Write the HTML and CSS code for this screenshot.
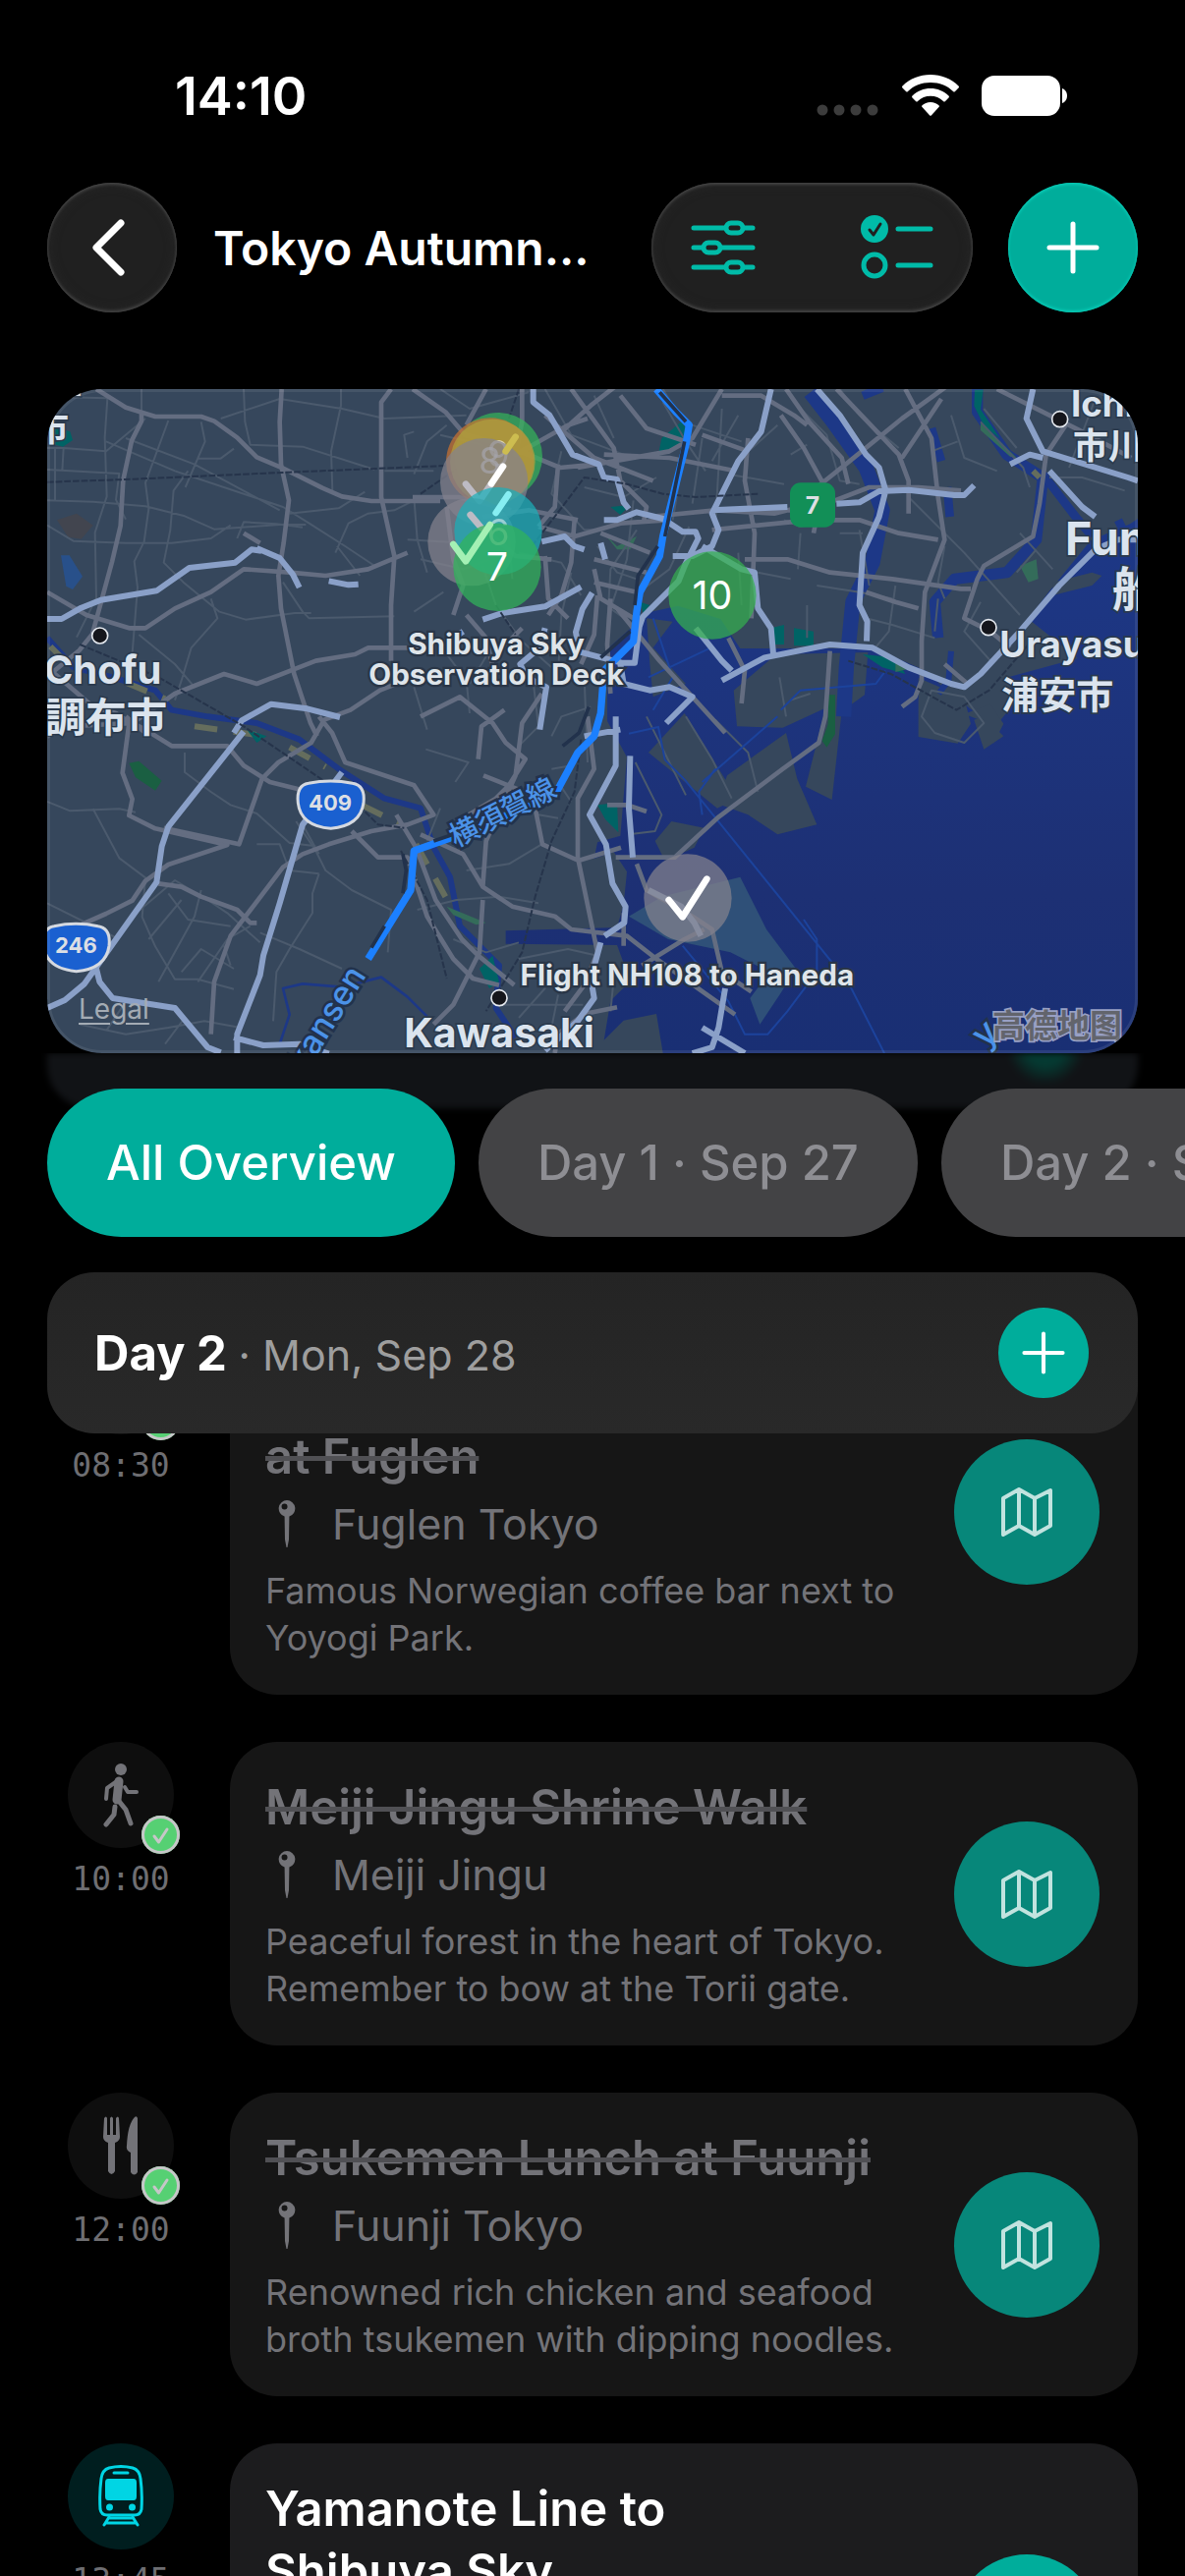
FILE: index.html
```
<!DOCTYPE html>
<html lang="en">
<head>
  <meta charset="UTF-8">
  <meta name="viewport" content="width=device-width, initial-scale=1.0">
  <title>Tokyo Autumn</title>
  <link rel="stylesheet" href="styles.css">
</head>
<body>
  <!-- shared icons -->
  <svg class="sprite" aria-hidden="true">
    <symbol id="i-plus" viewBox="0 0 54 54">
      <path d="M27 3v48M3 27h48" fill="none" stroke="currentColor" stroke-width="5" stroke-linecap="round"/>
    </symbol>
    <symbol id="i-map" viewBox="0 0 52 50">
      <path d="M2 11 18 2l16 9 16-8v36l-16 9-16-9-16 9zM18 2v37M34 11v37" fill="none" stroke="currentColor" stroke-width="4" stroke-linejoin="round"/>
    </symbol>
    <symbol id="i-pin" viewBox="0 0 18 48">
      <path fill-rule="evenodd" fill="currentColor" d="M9 0a8.500 8.500 0 0 1 2.400 16.600L11 40 9.500 48h-1L7 40 6.600 16.600A8.500 8.500 0 0 1 9 0zM6.500 3.500a3 3 0 1 0 .1 6 3 3 0 0 0-.1-6z"/>
    </symbol>
    <symbol id="i-check" viewBox="0 0 39 39">
      <path d="M13 21l4.500 6L26 14" fill="none" stroke="currentColor" stroke-width="3" stroke-linecap="round" stroke-linejoin="round"/>
    </symbol>
  </svg>

  <div class="app">
    <div class="status-bar">
      <span class="clock">14:10</span>
      <div class="status-icons">
        <svg width="64" height="12" viewBox="0 0 64 12" class="signal"><circle cx="6" cy="6" r="5.500"/><circle cx="23" cy="6" r="5.500"/><circle cx="40" cy="6" r="5.500"/><circle cx="57" cy="6" r="5.500"/></svg>
        <svg width="58" height="42" viewBox="0 0 58 42" fill="#fff">
          <path d="M29 0C40 0 50 4 57.500 11.500q1 1 0 2L54 17q-1 1-2 0C46 11 38 8 29 8S12 11 6 17q-1 1-2 0L.5 13.500q-1-1 0-2C8 4 18 0 29 0z"/>
          <path d="M29 14c7 0 13.500 2.500 18.500 7.500q1 1 0 2L44 27q-1 1-2 0c-3.500-3.500-8-5.200-13-5.200S19.500 23.500 16 27q-1 1-2 0l-3.500-3.500q-1-1 0-2C15.500 16.500 22 14 29 14z"/>
          <path d="M29 28c3.500 0 6.500 1.300 8.500 3.300q.8.900 0 1.800l-7.500 8.200q-1 1-2 0l-7.500-8.200q-.8-.9 0-1.800C22.500 29.300 25.500 28 29 28z"/>
        </svg>
        <svg width="88" height="41" viewBox="0 0 88 41" fill="#fff"><rect width="80" height="41" rx="13"/><path d="M82 13c3 1 5 4 5 7.500s-2 6.500-5 7.500z"/></svg>
      </div>
    </div>

    <header class="nav">
      <button class="round-btn glass" aria-label="Back">
        <svg width="42" height="58" viewBox="0 0 42 58"><path d="M30 4 5 29l25 25" fill="none" stroke="#fff" stroke-width="7" stroke-linecap="round" stroke-linejoin="round"/></svg>
      </button>
      <h1 class="nav-title">Tokyo Autumn...</h1>
      <div class="nav-group glass">
        <button class="plain-btn" aria-label="Filters">
          <svg width="66" height="56" viewBox="0 0 66 56" fill="none" stroke="currentColor" stroke-width="5" stroke-linecap="round">
            <path d="M3 8h32M54 8h9M3 28h8M32 28h31M3 48h32M54 48h9"/>
            <rect x="36" y="3" width="17" height="10" rx="5"/><rect x="13" y="23" width="17" height="10" rx="5"/><rect x="36" y="43" width="17" height="10" rx="5"/>
          </svg>
        </button>
        <button class="plain-btn" aria-label="Checklist">
          <svg width="74" height="66" viewBox="0 0 74 66" fill="none" stroke="currentColor" stroke-width="5" stroke-linecap="round">
            <circle cx="14" cy="14" r="14" fill="currentColor" stroke="none"/>
            <path d="M9 15l4 5 7-11" stroke="#202020" stroke-width="3" stroke-linejoin="round"/>
            <circle cx="14" cy="51" r="11"/><path d="M38 14h33M38 51h33"/>
          </svg>
        </button>
      </div>
      <button class="round-btn accent" aria-label="Add"><svg width="54" height="54"><use href="#i-plus"/></svg></button>
    </header>

    <main>
      <section class="map" aria-label="Trip map">
        <svg viewBox="0 0 3330 2028">
          <rect width="3330" height="2028" fill="#36475c"/>

          <!-- Tokyo bay -->
          <linearGradient id="sea" x1="0" y1="0" x2="0" y2="1"><stop offset="0" stop-color="#1d3887"/><stop offset=".7" stop-color="#1d3074"/><stop offset="1" stop-color="#192f74"/></linearGradient>
          <path fill="url(#sea)" d="M1836 682l90-20 130 40 60 90 180 0h230l160 70 60 60 80 60 60 60 40-50 30-60-30-50 110-30 110-30-150-120 60-80 130-160 120-50 30-20V2028H1880l-20-120-100 20-60 60 20-120 60-60-40-110-340-4v-40l340-10 20-70 10-100-40-60-60 20 10-50 70-20 20-240-60-110v-220z"/>
          <!-- islands and reclaimed land -->
          <path fill="#36475c" d="M2046 1266l30-86 110-80 70-50 34 140 60 140-120 30-90-60zM1856 1380l50-60 100 20-30 60-90 40zM2096 920l130-110 280-6-10 130-70 50-30 270-80-40 60-240-130 60-140-4zM1836 1110l110-120 160 260-60 30zM2660 882l140 60 20 80-40 60-120-20zM2800 992l80-30 40 60-30 60-40-70zM2860 1000l60 60-60 40-30-90zM3070 590l120-30 30 10-30 30-120 30zM1830 700l80 10-60 80 100 110-100 40-10-100z"/>
          <path fill="#2f5078" d="M1776 1610l100-60 240-60 80 160 90 120-50 80-60 90-30-80 60-80-120-60-190-40z"/>

          <!-- rivers -->
          <g fill="none" stroke="#1d3887" stroke-linejoin="round">
            <path stroke-width="46" d="M2330 10l70 90 100 140 50 130-30 160-60 120-20 200-8 150"/>
            <path stroke-width="34" d="M2840 0v70l90 130 110 70-20 190-90 100-160 20-60 70 10 110"/>
            <path stroke-width="26" d="M3040 260l100 130 50 60M2700 120l30 100M2748 300l8 90M2490 20l60-24M3270 400l30 60"/>
            <path stroke-width="18" d="M0 760l80 90 120 30 130 40 50 60 110 20 150 20 130 50 120 90 140 90 110 30 40 120 50 90 30 150 120 120-10 130 60 90"/>
            <path stroke-width="8" d="M710 2000l30-90-20-80 60-14 120 10 120-30 80 60 60 60"/>
            <path stroke-width="18" d="M2760 800l-8 90-30 40"/>
          </g>
          <g fill="none" stroke="#656d5d" stroke-width="18" stroke-dasharray="70 50">
            <path d="M10 786l30 30M240 896l120 50M450 1030l190 26M740 1094l110 60M960 1270l120 60M1126 1390l90 160M3010 250l20 20"/>
          </g>
          <g fill="#006365">
            <path d="M10 110l60 20 8 26-30 20-40-10zM1876 150l60-50 30 40-50 40-50 20zM1720 360l60-6-30 30zM1810 650l30 10-20 26zM2210 730l40-10v60h-40zM2280 730l60 10v44h-60zM1360 1730l20 80-30 20-30-60zM610 1040l60 20-30 20zM1680 1270l60-6 4 90-40-40zM2490 810l100 10 30 50-70-20z"/>
            <path d="M2832 2h26l-8 60 60 90-50-40-30-60z"/>
          </g>
          <path fill="#1a5f42" d="M250 1142l30-6 70 60-20 30-60-40zM2386 934h20v120l-26 40-14-20 18-50z"/>
          <path fill="#346c5a" d="M1700 440l40 40 60-30-20 40h-40zM2970 540l50-20 6 60-30 10zM2590 830l60 20-60 14zM2850 100l110 110-20-4-90-80zM1220 1580l120 50-30 6-70-30z"/>
          <path fill="#42454f" d="M30 400l60-20 50 36-36 42-40-6z"/>
          <path fill="#28508a" d="M42 508h26l40 64-30 40-20-10z"/>

          <!-- streets -->
          <g class="street">
            <path d="M288 0v70M24 24l160 4-8 120 6 180-36 110 4 200-60 120M0 180h50l130 10 120-100M0 246l220 12-10 80 30 60M0 340l140 4 160 14 120 30 90 40 200-14 80 0M24 180l0 160M50 180l-4 70M0 416l80 48 160 6 140 0 120-14 60-40M370 96l-70 190 10 80-14 100-30 60 10 80-16 200M430 250l-44 60-10 120-20 100 60 60 110 90 80 24 150-20h50M180 160l210 90 330 110 80 50 110 70 90 60M240 150l210 80 260 140M470 100l12 60-60 140M530 90l180-60 190 30 130 30 250-10M600 0l4 100 16 70 160 6 220 70M897 0v50l-30 140 4 120M460 212h70l40-30M740 380l150-16 80-50M580 456l20-50 100 6 80 10M1030 250h150M1100 210l-10-70 30-10M1120 260l40-100 60-50M720 590l60 90 20 20 260-6M500 640l20 60-80 90-30 100-20 60M280 750l110 90 60 70M880 500l40-90 60-30 80-10 80-40M885 480l70 90M1100 460l180 10M1120 330l10 130 30 100"/>
            <path d="M0 1260l70 28 150-6 50 10M140 1282l80 150 80 60-10 120 40 90 60 100 70 0 110 30M420 1110v60l80 60 60 40 80 26 100 90 80 10M640 1390h70l30 80 90 10M760 1320l60 90 30 60 80 60 120 60-10 130M830 1480l-20 60v60l-70 110-40 70-10 150M260 1610l130-110 100 60 60 40 100 90M370 1540l60 80 130 20M310 1680l100-120M340 1810l110-200 20-80M460 1810l90-130 70-40M410 1780l60-70 100 60M0 1570l220 110M100 1940l140 30 130-20 110-20 110 20M180 1960l60-90M360 2000l60-80M540 1700l20 60M650 1660l120 50 130 60M830 1420l-50-90"/>
            <path d="M1140 520l130 30 80-30M1160 1040l-40-130M1120 680l90-60M1200 0l90 60 180-50M1200 140l130 30M1350 400l60 60 10 120M1440 500l130 30 60 100M1520 0l80 140 160 60M1670 20l60 130M1570 190l-30 130 100 110 60 0M1640 300l120 30 100-60M1880 40l70 120 60 90M1880 0l60 100 180 60M1950 160l-40 240M2000 150l-30 200M2060 60l-20 360M2110 80l-80 140M2080 260l170 30M2130 200l100-90M1790 340l-20 180-50 150 70 50M1800 430l-80 120-10 180M1960 420l-60 130-80 60M2170 560l100 20M2110 500l10 160M1680 480l60 80 60 20M1600 560l-30 130-10 180M1330 540l40 120 80 110 90 80M1190 770l90 120 10 100M1290 900l60-100M1480 860l20 170-60 60M1540 1060l30-60 90-30M1640 880l10 260"/>
            <path d="M2256 1000l-20-120M2250 400l50 20 100-20M2270 200l50-30M2300 60l80 80 40 140 60 10M2420 0l60 80 120 100M2700 190l80-30M2760 80l40 130 100 40M2860 60l100 120M2850 100l130 140 20 60M2350 600l130 20 100 20M2480 430l30 170M2500 700l80 20 130 40M2590 600l-20 140-50 60M2720 640l-10 100M2630 330l170 170 170 190M2850 650l-50 90 80 90M2740 480l-20 110 20 50M2970 440l100 110M2420 440l70 0M2300 440l-8 110M2320 660v100M2960 560l60-70M3060 270h100l130 40"/>
            <path d="M1156 1100l130 40-40 60M1200 1280l-40 100M1280 1470l130-20 100-60M1130 1590l120-30 130-10 120 20M1240 1680l100 40 100-30M1440 1740l150-30 90 20M1376 1880h260M1440 1920l80-90 10-80M1560 1850l-20 100M1720 1900l10-100M1796 1140l80 160-20 50-80 10M1540 1160l60-10M1500 1300l60 10M1560 1200l40 60"/>
            <path d="M1950 1000l80 130 60 120M2040 1010l100 100 30 120M1830 1000l120 240M2330 930l-60 20M2670 1000l40 50 90 30 60-60-60-80-100-20zM3200 30l-80 210"/>
          </g>
          <g class="channel">
            <path d="M1776 1052l90-20 20 100 60 60 500 620 110 216M2000 1200l230-200M2000 1300l-10-70 50-70M2240 980l60-60 230-20 30-40M1836 880l190-90M1850 700l60 180-60 100M1940 1700l140 170 50 100h70l60-70 90-120v-100l-40-60"/>
          </g>

          <!-- arterial roads -->
          <g id="arterials" class="artery">
            <path d="M150 0l90 56 90 28h140l40 14 70 50 60 60 80 34 120 60 60 26 90 14h210"/>
            <path d="M288 70v28l-30 60-26 120-8 140-26 110-60 220-40 50-110 90M716 0l-6 100 4 130 24 110-16 130-16 100 8 100 40 200 50 150 20 40"/>
            <path d="M1050 0l-30 40v290l40 180-10 150v170M0 620l120 70 130 40h50l90-60 110-50 100-70 140 10 110 10 130-20 120-50M600 440l50 30"/>
            <path d="M0 1060l60-30 200-10 130-90 150-60 100 30 180-70 120-20 40-20h180M300 1050l-60-50M0 850l140 120 70 20 30 20 60 30 80 50h170l50 60 80 50 160 40M250 1022l-20 150 30 80-10 50 80 40 220 50-180 60-70 50-40 60-80 40-180 80"/>
            <path d="M356 1340l230 50 70-200 50-50 100-60 40-70 80-30 90-60 100-40M340 1510l70 10 60 30 110 40 40 40 20 0M830 1000l40 50 40 90 210 70 60 90-80 30-110 20-130 40-80 30-60 40-160 210-50 140-10 160M930 1350l80 80h90l60 180 80 130 60 60 80 20"/>
            <path d="M1066 1300l60 100 60 160 80 120 50 50 110 90M1140 1000l120-60 100 80 40 60 60 50-50 80-40 40-100 60M1316 1130l10-100 70-50M1332 1180l150 60 30 150 110 50 130-40M1140 1360l130 60 60 100 90 60 130 30 50 40 170 20 90 70 240 170M1550 2028l10-60 80-60 100-20M1330 1520l10-140 90-200 20-160 60-90M1620 1430l60 290-40 100-60 80M1330 1560l-10 160-80 160-60 60M1760 1600v100M1816 1760l130-80 60-30M1620 1440l0-190 50-90-20-160"/>
            <path d="M1116 0l100 70 60 70 120 30 170 70 110-10M1340 0l-60 110M1450 0v100l-20 100 160-90 60-20M1520 80l150 130 180 70M1600 0l130 180 20 100 80 80-10 50M1750 20l80 100 150 50M1560 140l100-90 90-70M2060 0l-90 150-70 40-170 30-110 20M2000 140l140 50M2060 20h120l100 60 40 30M1116 330h140l160 40M1700 200l200 10 200 40M1560 230l-10 130-50 60M1220 360l20 160 30 80-30 90M1330 390l140-20 150 30M1500 420l110 30 140-40 140-10M1840 390l200-20 180 10 80-20M2140 150l-10 130 30 160-10 260M2256 0l70 100 100 110 20 80M2140 370h180l60-20 130-50h150l130 10M2030 430l300-30h150l120 40 120 20M2130 520h130l130 40 190 20 210 30 30 0M1350 440l80 70 110 10M1520 510l10 130 60 60M1610 400l-10 130-30 100-40 60"/>
            <path d="M1740 670l130 160 200 220M2080 760l50 100-10 100M1720 640l-10 140 10 150M1680 630l-10 120-40 90M1790 700l-100-60-20-90M1840 500l-150-60M1830 560l-160-40M1800 620l-130-30M1450 730l-60 60M1280 690l60 70 30 130"/>
            <path d="M2350 300l100-80 160-130 180-130M2410 0l190 200 30 80v100M2620 0l80 150 20 180 20 130-60 160-10 150v120l-20 50-40 30M2610 210l120-180M2240 80l70 100 60 110-30 150M2900 0l100 50 160 80 150 80M3110 110l-60 90-20 150-20 100-150 90-20 40-40 120 80 40 60 50M2500 620l90 30 70 20M2390 800l-14 200-20 80-110 80-200 150-130 120h-140l-40 0M2810 900l-70-60M1830 1290l-60-20h-60M1800 1450l30 80 140 80 60 40 30 130 90 60"/>
          </g>

          <!-- expressways -->
          <g class="express">
            <path d="M0 702h44l60-34 60-24 170-28 100-70 140-16 50-40 30 4M640 486l70 30 40 50 20 40M860 586l60 12 30-2M570 1050l24-38 90-50 110 14 100 26"/>
            <path d="M900 1170l-120 160-70 240-50 160-10 60-70 180v58M600 1046l-230 290-20 60-16 110-220 310-60 50-90 40M150 1770l10 40 40 50 190 30 50 60 50 60 40 16M570 1980l90 24 110-4 90 30"/>
            <path d="M1484 0v40l50 40 70 120 80 30 16 40 40 6 20 70 16 20M1700 400h40l60-24 80 20 60 40 40 0 8 20-40 80-20 50-110 110-10 30-14 110h-40l-130-34-10-60 20-70 30-50M1510 466l70-16 30 30 30 10M1690 470l14 50M1330 704l60-20 130-20 110-60M1270 740l-60 40M1520 730l-16 60-60 50 20 40 60 30-20 130M2210 0l-30 130-70 90-60 120-20 40 20 50-20 50-60 30h-60M2030 370l230-10M2000 480l120 70 40 10 10 110 40 60 8 90M1980 730l80 100 30 30M2060 890l130-70 200-40 130 10 110 60 130 50 40 10 50-40 120-130 120-140 110-110 70-30h130M1750 840l10 60 80 20 60-10 70 30-80 80"/>
            <path d="M2350 0l70 80 80 120 40 40 20 70-20 80-50 110-10 160 24 50-2 60M2410 350l70-4 60-34 90-4 140 16h30l30-30M3010 0l-20 90 50 100 260 80 30 10M2940 230l60-30 40 10M3060 250l100 110 40 30"/>
            <path d="M1736 1000v150l-80 150 50 90 20 120 40 70-4 50-60 40M1640 1060l110-20M1780 1120l-4 160 12 150M1836 1530l100 50 40 50 20 40M1690 1690l-30 110 10 60-50 70-100 90M2070 1830l-20 120-20 60-60 18M2000 1950l130 78"/>
          </g>

          <!-- railways -->
          <path class="rail" d="M0 284l240-8 500-22 480-20M100 780l240 100 260 150 250 170 100 70 60 60 80 10M1440 0l-30 90M1140 320l130-90M1480 480l100-130 60-80 130 20 110 30 100 10 190-10M1370 660l60 90M1630 1070l-20 160-70 150-50 170-40 170-110 180M1080 1410l80 150 60 240M2996 780l-120 140-100 60-200-110-130-40"/>
          <path class="line-blue" d="M1860 0l60 70 40 40-10 60-70 280-10 60-60 110-10 60-10 90-90 90-10 130-20 70-50 50-70 130-260 110-170 60-10 120-130 210"/>
          <path class="line-dash" d="M1870 10l80 90M1946 160l-60 290M1864 480l-60 90-10 90M1780 740l-90 80M1654 970l-30 80-50 40M1180 1380l60-20M1086 1420l10 50-10 70M1030 1640l-40 66"/>

          <!-- haloed place names -->
          <g class="place">
            <text x="108" y="22" text-anchor="end" font-size="105">Mitaka</text>
            <text x="-39" y="160" font-size="105">市</text>
            <text x="-10" y="900" font-size="120">Chofu</text>
            <text x="-6" y="1046" font-size="124">調布市</text>
            <text x="1090" y="2010" font-size="123">Kawasaki</text>
            <text x="3126" y="84" font-size="110">Ichikawa</text>
            <text x="3132" y="214" font-size="108">市川市</text>
            <text x="3108" y="508" font-size="140">Funabashi</text>
            <text x="3252" y="664" font-size="144">船橋</text>
            <text x="2908" y="820" font-size="110">Urayasu</text>
            <text x="2914" y="974" font-size="114">浦安市</text>
          </g>
          <g class="place-dot"><circle cx="161" cy="753" r="24"/><circle cx="1380" cy="1859" r="24"/><circle cx="3092" cy="92" r="24"/><circle cx="2874" cy="728" r="24"/></g>
          <g class="line-name">
            <text transform="translate(1248 1400) rotate(-27)" font-size="88">横須賀線</text>
            <text transform="translate(976 1790) rotate(-58)" text-anchor="end" font-size="102">Shinkansen</text>
            <text transform="translate(2864 2016) rotate(-43)" font-size="110">y</text>
          </g>

          <!-- route shields -->
          <g class="shield">
            <path id="shield" d="M798 1204q67-14 134 0 40 6 34 60-10 70-100 78-92-8-100-78-6-54 32-60z"/>
            <use href="#shield" x="-777" y="436"/>
            <rect x="2268" y="286" width="138" height="136" rx="32" fill="#128f57" stroke="none"/>
            <text x="864" y="1287" font-size="66">409</text>
            <text x="88" y="1722" font-size="66">246</text>
            <text x="2337" y="382" font-size="74">7</text>
          </g>

          <!-- stops -->
          <g class="stop">
            <circle cx="1378" cy="206" r="134" fill="#34b45a"/>
            <circle cx="1352" cy="222" r="134" fill="#c97131"/>
            <circle cx="1360" cy="222" r="130" fill="#b0a03e"/>
            <text x="1378" y="236" font-size="110" opacity=".6" fill="#e8a09a">9</text>
            <text x="1352" y="258" font-size="110" opacity=".7">8</text>
            <circle cx="1334" cy="284" r="134" fill="#84828e"/>
            <path class="tick tick-past" d="M1278 290l42 52 36-53"/>
            <path class="tick" d="M1356 289l36-53"/>
            <path class="tick tick-gold" d="M1400 190l30-44"/>
            <circle cx="1296" cy="467" r="134" fill="#84828e"/>
            <circle cx="1377" cy="434" r="134" fill="#1baeb9"/>
            <path class="tick tick-past" d="M1292 384l34 40"/>
            <path class="tick tick-cyan" d="M1370 378l38-56"/>
            <text x="1377" y="478" font-size="110" opacity=".5">6</text>
            <circle cx="1374" cy="544" r="134" fill="#30b45a"/>
            <path class="tick tick-green" d="M1240 474l38 52 74-112"/>
            <text x="1374" y="584" font-size="118">7</text>
            <circle cx="2031" cy="630" r="134" fill="#34b04f"/>
            <text x="2031" y="672" font-size="118">10</text>
            <circle cx="1956" cy="1554" r="134" fill="#84828e"/>
            <path class="tick" d="M1898 1560l42 52 74-116"/>
          </g>
          <g class="stop-name">
            <text x="1371" y="810">Shibuya Sky</text>
            <text x="1371" y="904">Observation Deck</text>
            <text x="1954" y="1820">Flight NH108 to Haneda</text>
          </g>
          <text class="watermark" x="2886" y="1980" font-size="99">高德地图</text>
        </svg>
        <a class="legal" href="#legal">Legal</a>
      </section>

      <div class="pinned">
        <nav class="tabs">
          <button class="tab active">All Overview</button>
          <button class="tab">Day 1 · Sep 27</button>
          <button class="tab">Day 2 · Sep 28</button>
        </nav>
        <div class="day-header">
          <h2>Day 2 <span>· Mon, Sep 28</span></h2>
          <button class="day-add" aria-label="Add to Day 2"><svg width="44" height="44"><use href="#i-plus"/></svg></button>
        </div>
      </div>

      <ul class="timeline">
        <li class="item done">
          <div class="when">
            <span class="kind">
              <span class="badge"><svg width="39" height="39"><use href="#i-check"/></svg></span>
            </span>
            <time>08:30</time>
          </div>
          <article class="card">
            <div class="card-text">
              <h3><s>Morning Coffee<br>at Fuglen</s></h3>
              <p class="place-line"><svg width="18" height="48"><use href="#i-pin"/></svg>Fuglen Tokyo</p>
              <p class="note">Famous Norwegian coffee bar next to Yoyogi Park.</p>
            </div>
            <button class="map-btn" aria-label="Open Fuglen in map"><svg width="52" height="50"><use href="#i-map"/></svg></button>
          </article>
        </li>
        <li class="item done">
          <div class="when">
            <span class="kind">
              <svg width="36" height="66" viewBox="0 0 36 66" fill="none" stroke="currentColor" stroke-linecap="round" stroke-linejoin="round">
                <circle cx="18" cy="7" r="6" fill="currentColor" stroke="none"/>
                <path d="M16 19 14 38" stroke-width="9"/>
                <path d="M14 19 4 26 3 37M22 25l3 5h9" stroke-width="4"/>
                <path d="M15 38l8 10 5 14M12 45l-1 8-8 10" stroke-width="5"/>
              </svg>
              <span class="badge"><svg width="39" height="39"><use href="#i-check"/></svg></span>
            </span>
            <time>10:00</time>
          </div>
          <article class="card">
            <div class="card-text">
              <h3><s>Meiji Jingu Shrine Walk</s></h3>
              <p class="place-line"><svg width="18" height="48"><use href="#i-pin"/></svg>Meiji Jingu</p>
              <p class="note">Peaceful forest in the heart of Tokyo. Remember to bow at the Torii gate.</p>
            </div>
            <button class="map-btn" aria-label="Open Meiji Jingu in map"><svg width="52" height="50"><use href="#i-map"/></svg></button>
          </article>
        </li>
        <li class="item done">
          <div class="when">
            <span class="kind">
              <svg width="36" height="60" viewBox="0 0 36 60" fill="currentColor">
                <path d="M1 2q2-3 3 0v17h3V2q1.500-3 3 0v17h3V2q2-3 3 0l1 19q0 4-5 6v29q-3.500 6-7 0V27q-5-2-5-6z"/>
                <path d="M35 2v55q-3.500 5-7 0V37q-5-2-4-7Q25 8 32 1q2-2 3 1z"/>
              </svg>
              <span class="badge"><svg width="39" height="39"><use href="#i-check"/></svg></span>
            </span>
            <time>12:00</time>
          </div>
          <article class="card">
            <div class="card-text">
              <h3><s>Tsukemen Lunch at Fuunji</s></h3>
              <p class="place-line"><svg width="18" height="48"><use href="#i-pin"/></svg>Fuunji Tokyo</p>
              <p class="note">Renowned rich chicken and seafood broth tsukemen with dipping noodles.</p>
            </div>
            <button class="map-btn" aria-label="Open Fuunji in map"><svg width="52" height="50"><use href="#i-map"/></svg></button>
          </article>
        </li>
        <li class="item">
          <div class="when">
            <span class="kind train">
              <svg width="46" height="64" viewBox="0 0 46 64" fill="none" stroke="currentColor" stroke-width="3" stroke-linecap="round">
                <path d="M11 3q12-3 24 0 7 2 8 11 2 15 1 31-1 6-7 6H9q-6 0-7-6Q1 29 3 14q1-9 8-11z"/>
                <path d="M16 8h14M12 54h22M11 53 6 61M35 53l5 8M9 59h28"/>
                <path d="M10 14h26q3 0 3 4v14q0 4-3 4H10q-3 0-3-4V18q0-4 3-4z" fill="currentColor" stroke="none"/>
                <circle cx="11.500" cy="43" r="3.500" fill="currentColor" stroke="none"/><circle cx="34.500" cy="43" r="3.500" fill="currentColor" stroke="none"/>
              </svg>
            </span>
            <time>13:45</time>
          </div>
          <article class="card">
            <div class="card-text">
              <h3>Yamanote Line to<br>Shibuya Sky</h3>
              <p class="place-line"><svg width="18" height="48"><use href="#i-pin"/></svg>Shibuya Sky</p>
              <p class="note">Ride the Yamanote Line and walk to the observation deck.</p>
            </div>
            <button class="map-btn" aria-label="Open Shibuya Sky in map"><svg width="52" height="50"><use href="#i-map"/></svg></button>
          </article>
        </li>
      </ul>
    </main>
  </div>
</body>
</html>
```
FILE: styles.css
```
* {
  box-sizing: border-box;
}
body {
  margin: 0;
  background: #000;
  color: #fff;
  font-family: Inter, "Noto Sans CJK JP", sans-serif;
}
h1, h2, h3, p, ul {
  margin: 0;
  padding: 0;
}
button {
  border: none;
  padding: 0;
  background: none;
  color: inherit;
  font: inherit;
  cursor: pointer;
  display: flex;
  align-items: center;
  justify-content: center;
}
svg {
  display: block;
  flex: none;
}
.sprite {
  position: absolute;
  width: 0;
  height: 0;
}
.app {
  height: 100vh;
  overflow: hidden;
}

/* status bar */
.status-bar {
  display: flex;
  justify-content: space-between;
  align-items: center;
  height: 186px;
  padding: 8px 119px 0 178px;
}
.clock {
  font-size: 54px;
  font-weight: 600;
}
.status-icons {
  display: flex;
  align-items: flex-end;
  gap: 23px;
}
.signal {
  fill: #3c3c3c;
}

/* navigation */
.nav {
  display: flex;
  align-items: center;
  height: 132px;
  padding: 0 48px;
}
.round-btn {
  flex: none;
  width: 132px;
  height: 132px;
  border-radius: 50%;
}
.glass {
  background: #202020;
  box-shadow: inset 0 2px 3px #444, inset 0 -2px 3px #444, inset 0 0 12px #2a2a2a;
}
.accent {
  background: #00ad9b;
  box-shadow: inset 0 2px 3px #08c9b4, inset 0 -2px 3px #08c9b4;
}
.nav-title {
  flex: 1;
  padding-left: 37px;
  font-size: 48px;
  font-weight: 600;
  white-space: nowrap;
}
.nav-group {
  display: flex;
  justify-content: space-between;
  width: 327px;
  height: 132px;
  padding: 0 40px;
  margin-right: 36px;
  border-radius: 66px;
  color: #00bba8;
}

/* map */
.map {
  position: relative;
  margin: 78px 48px 0;
  border-radius: 56px;
  overflow: hidden;
}
.map::after {
  content: "";
  position: absolute;
  inset: 0;
  border: 3px solid rgba(255, 255, 255, 0.08);
  border-radius: 56px;
  pointer-events: none;
}
.map svg {
  width: 100%;
  height: auto;
}
.street {
  fill: none;
  stroke: #4b5a6d;
  stroke-width: 6;
  stroke-linejoin: round;
}
.channel {
  fill: none;
  stroke: #1c439c;
  stroke-width: 6;
}
.artery {
  fill: none;
  stroke: #646d81;
  stroke-width: 14;
  stroke-linejoin: round;
}
.express {
  fill: none;
  stroke: #8aa0c8;
  stroke-width: 18;
  stroke-linejoin: round;
}
.rail {
  fill: none;
  stroke: #26344b;
  stroke-width: 6;
  stroke-dasharray: 20 6;
}
.line-blue {
  fill: none;
  stroke: #1c80ff;
  stroke-width: 22;
  stroke-linejoin: round;
}
.line-dash {
  fill: none;
  stroke: #22324c;
  stroke-width: 11;
}
.place text {
  fill: #dbe4ee;
  stroke: #2b3a4d;
  stroke-width: 10;
  paint-order: stroke;
  font-weight: 700;
}
.place-dot circle {
  fill: #15161c;
  stroke: #e4e8ee;
  stroke-width: 5;
}
.line-name text {
  fill: #4b92e8;
  stroke: #22324c;
  stroke-width: 16;
  paint-order: stroke;
  font-weight: 500;
}
.shield path,
.shield use {
  fill: #1a60d0;
  stroke: #d5d9e0;
  stroke-width: 9;
}
.shield text {
  fill: #dcdfe4;
  font-weight: 700;
  text-anchor: middle;
}
.stop circle {
  opacity: 0.72;
}
.stop text {
  fill: #fff;
  text-anchor: middle;
}
.tick {
  fill: none;
  stroke: #fff;
  stroke-width: 20;
  stroke-linecap: round;
  stroke-linejoin: round;
}
.tick-past {
  stroke: #bdbbc4;
}
.tick-gold {
  stroke: #cdbd50;
}
.tick-cyan {
  stroke: #86eef2;
}
.tick-green {
  stroke: #a4f0b4;
}
.stop-name text {
  fill: #dfe5ea;
  stroke: #2a3647;
  stroke-width: 14;
  paint-order: stroke;
  font-size: 89px;
  font-weight: 700;
  text-anchor: middle;
}
.watermark {
  fill: #62646c;
  stroke: #98a0c4;
  stroke-width: 10;
  paint-order: stroke;
  font-family: "Noto Sans CJK SC", sans-serif;
  font-weight: 700;
}
.legal {
  position: absolute;
  left: 32px;
  bottom: 28px;
  color: #a3abb4;
  font-size: 28px;
  text-underline-offset: 4px;
}

/* tabs and day header stay on top of the scrolled list */
.pinned {
  position: relative;
  z-index: 1;
  padding-top: 36px;
}
.pinned::before {
  content: "";
  position: absolute;
  inset: 0 48px auto;
  height: 56px;
  z-index: -1;
  background: radial-gradient(circle 40px at 1016px -8px, #053a32 50%, transparent), #111316;
  border-radius: 0 0 44px 44px;
  filter: blur(3px);
  clip-path: inset(0 -20px -20px);
}
.tabs {
  display: flex;
  gap: 24px;
  padding-left: 48px;
  overflow: hidden;
}
.tab {
  flex: none;
  height: 151px;
  padding: 0 60px;
  border-radius: 76px;
  background: #434345;
  color: #8e8e93;
  font-size: 49px;
  font-weight: 500;
}
.tab.active {
  background: #00ad9b;
  color: #fff;
}
.day-header {
  display: flex;
  align-items: center;
  justify-content: space-between;
  height: 164px;
  margin: 36px 48px 0;
  padding: 0 50px 0 48px;
  border-radius: 48px;
  background: linear-gradient(#242424, #292929);
}
.day-header h2 {
  font-size: 49px;
  font-weight: 700;
}
.day-header span {
  color: #9e9e9e;
  font-size: 43px;
  font-weight: 400;
}
.day-add {
  width: 92px;
  height: 92px;
  border-radius: 50%;
  background: #00ad9b;
}

/* timeline */
.timeline {
  list-style: none;
  display: flex;
  flex-direction: column;
  gap: 48px;
  margin-top: -107px;
  padding: 0 48px;
}
.item {
  display: flex;
  gap: 36px;
}
.when {
  flex: none;
  display: flex;
  flex-direction: column;
  align-items: center;
  gap: 12px;
  width: 150px;
  color: #737378;
}
.when time {
  font-family: "DejaVu Sans Mono", monospace;
  font-size: 33px;
  line-height: 40px;
  color: #6e6e72;
}
.kind {
  position: relative;
  display: flex;
  align-items: center;
  justify-content: center;
  width: 108px;
  height: 108px;
  border-radius: 50%;
  background: #0e0e0e;
}
.kind.train {
  background: #001e1f;
  color: #00d5e4;
}
.badge {
  position: absolute;
  right: -6px;
  bottom: -6px;
  border-radius: 50%;
  background: #56d073;
  color: #c6c6c8;
  box-shadow: inset 0 0 0 3px #c6c6c8;
}
.card {
  flex: 1;
  display: flex;
  align-items: center;
  justify-content: space-between;
  gap: 36px;
  padding: 35px 39px 34px 36px;
  border-radius: 48px;
  background: #1c1c1e;
}
.card h3 {
  font-size: 49px;
  font-weight: 600;
  line-height: 64px;
}
.card s {
  text-decoration-color: #505054;
  text-decoration-thickness: 5px;
}
.place-line {
  display: flex;
  align-items: center;
  gap: 37px;
  margin-top: 9px;
  padding-left: 13px;
  font-size: 43px;
  line-height: 54px;
  color: #8e8e93;
}
.note {
  margin-top: 17px;
  font-size: 36px;
  line-height: 48px;
  color: #8e8e93;
}
.map-btn {
  flex: none;
  width: 148px;
  height: 148px;
  border-radius: 50%;
  background: #00ad9b;
}
.done .card {
  background: #161616;
}
.done .card-text,
.done .card-text p {
  color: #737378;
}
.done .map-btn {
  background: #07877a;
  color: #c1e3df;
}
```
